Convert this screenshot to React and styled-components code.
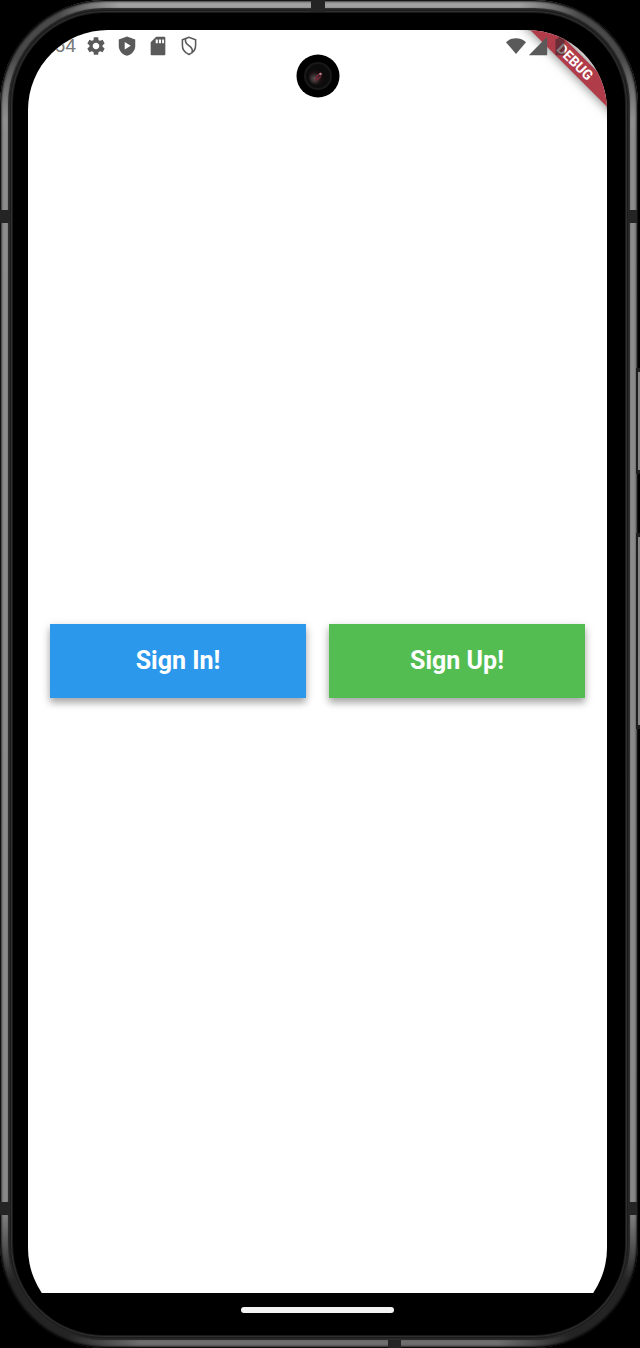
import React from "react";
import styled, { createGlobalStyle, css } from "styled-components";
import { MdSettings, MdSignalCellular4Bar, MdBatteryFull } from "react-icons/md";

const GlobalStyle = createGlobalStyle`
  *, *::before, *::after { box-sizing: border-box; }
  body {
    margin: 0;
    background: #000;
    font-family: Roboto, "Liberation Sans", sans-serif;
  }
`;

const Stage = styled.div`
  display: flex;
  min-height: 100vh;
  padding-right: 2px;
  position: relative;
  overflow: hidden;
`;

const Device = styled.div`
  position: relative;
  flex: 1;
  display: flex;
  padding: 10px;
  border-radius: 104px;
  overflow: hidden;
  background:
    radial-gradient(circle at 34px 34px, #4a4a4a 30px, transparent 90px),
    radial-gradient(circle at calc(100% - 34px) 34px, #4a4a4a 30px, transparent 90px),
    radial-gradient(circle at 34px calc(100% - 34px), #242424 40px, transparent 110px),
    radial-gradient(circle at calc(100% - 34px) calc(100% - 34px), #242424 40px, transparent 110px),
    linear-gradient(#a2a2a2, #8c8c8c 10%, #888 94%, #6c6c6c);

  &::after {
    content: "";
    position: absolute;
    inset: 0;
    border-radius: inherit;
    pointer-events: none;
    box-shadow:
      inset 0 0 0 1px rgba(0, 0, 0, 0.7),
      inset 0 0 2px 2px rgba(0, 0, 0, 0.6);
  }
`;

const Bezel = styled.div`
  flex: 1;
  display: flex;
  padding: 20px 21px 10px 18px;
  border-radius: 94px;
  background: #000;
  box-shadow:
    0 0 1px 2px #262626,
    inset 0 0 0 1px #1c1c1c,
    inset 0 0 0 2px #303030,
    inset 0 0 0 3px #1a1a1a;
`;

const Screen = styled.div`
  position: relative;
  flex: 1;
  display: flex;
  flex-direction: column;
  border-radius: 80px;
  overflow: hidden;
`;

const AppView = styled.div`
  flex: 1;
  display: flex;
  flex-direction: column;
  background: #fff;
`;

const StatusBar = styled.header`
  position: relative;
  z-index: 2;
  display: flex;
  justify-content: space-between;
  align-items: center;
  height: 32px;
  padding: 0 36px 0 22px;
  color: #5a5a5a;
`;

const StatusGroup = styled.div`
  display: flex;
  align-items: center;
  gap: ${(p) => p.$gap}px;

  svg { display: block; width: 22px; height: 22px; }
`;

const Clock = styled.time`
  font-size: 19px;
  line-height: 22px;
  color: #7a7a7a;
`;

const BatteryIcon = styled(MdBatteryFull)`
  color: #3a2428;
  opacity: 0.6;
`;

const Camera = styled.svg`
  position: absolute;
  z-index: 2;
  top: 24px;
  left: 50%;
  width: 44px;
  height: 44px;
  margin-left: -22px;
`;

const DebugBanner = styled.div`
  position: absolute;
  z-index: 1;
  top: 23px;
  right: -48px;
  width: 160px;
  height: 18px;
  background: #b03c4a;
  box-shadow: 0 0 12px rgba(0, 0, 0, 0.55);
  color: #fff;
  font-size: 14px;
  font-weight: 700;
  line-height: 18px;
  text-align: center;
  transform: rotate(45deg);
`;

const Actions = styled.main`
  flex: 1;
  display: flex;
  align-items: center;
  gap: 23px;
  padding: 0 22px 34px;
`;

const ActionButton = styled.button`
  flex: 1;
  height: 74px;
  border: 0;
  padding: 0;
  background: ${(p) => p.$color};
  box-shadow: 0 5px 7px rgba(0, 0, 0, 0.28), 0 2px 10px rgba(0, 0, 0, 0.12);
  color: #fff;
  font-family: inherit;
  font-size: 25px;
  font-weight: 700;
  line-height: 28px;
  cursor: pointer;
`;

const NavBar = styled.footer`
  display: flex;
  justify-content: center;
  height: 35px;
  padding-top: 14px;
`;

const NavHandle = styled.div`
  width: 153px;
  height: 6px;
  border-radius: 3px;
  background: #f4f4f4;
`;

const seamSides = {
  top: css`top: 0; left: 311px; width: 14px; height: 12px;`,
  bottom: css`bottom: 0; left: 388px; width: 13px; height: 8px;`,
  left: css`left: 0; width: 9px; height: 13px;`,
  right: css`right: 1px; width: 8px; height: 13px;`,
};

const Seam = styled.span`
  position: absolute;
  z-index: 1;
  background: #242424;
  ${(p) => seamSides[p.$side]}
  ${(p) => p.$top && css`top: ${p.$top}px;`}
  ${(p) => p.$bottom && css`bottom: ${p.$bottom}px;`}
`;

const SideKey = styled.span`
  position: absolute;
  z-index: 1;
  right: 0;
  top: ${(p) => p.$top}px;
  width: 4px;
  height: ${(p) => p.$length}px;
  border: solid #1e1e1e;
  border-width: 4px 0 4px 2px;
  background: #858585;
`;

const PlayShield = () => (
  <svg viewBox="0 0 24 24" fill="currentColor" aria-hidden="true">
    <path
      fillRule="evenodd"
      d="M12 1.5 3 5v7c0 5.200 3.800 9.300 9 10.700 5.200-1.400 9-5.500 9-10.700V5zM9.500 7.500v8.200l6.600-4.100z"
    />
  </svg>
);

const SdCard = () => (
  <svg viewBox="0 0 24 24" fill="currentColor" aria-hidden="true">
    <path
      fillRule="evenodd"
      d="M10 2h9q1 0 1 1v18q0 1-1 1H5q-1 0-1-1V8zM9.500 5v4h2.300V5zM13 5v4h2.300V5zM16.500 5v4h2V5z"
    />
  </svg>
);

const SlashShield = () => (
  <svg viewBox="0 0 24 24" fill="none" stroke="currentColor" strokeWidth="1.700" aria-hidden="true">
    <path d="M12 2.500 4.800 5.300v6.200c0 4.700 2.900 8 7.200 9.700 4.300-1.700 7.200-5 7.200-9.700V5.300z" />
    <path d="M8.300 4.200c-1 3.600.5 5.200 3.300 7.200 3.400 2.300 5 4.200 3.700 7.800" />
  </svg>
);

const WifiFan = () => (
  <svg viewBox="0 0 22 22" fill="currentColor" aria-hidden="true">
    <path d="M11 19 1 7.200C3.600 4.600 7 3.200 11 3.200s7.400 1.400 10 4z" />
  </svg>
);

export default function App() {
  return (
    <>
      <GlobalStyle />
      <Stage>
        <SideKey $top={368} $length={106} />
        <SideKey $top={533} $length={196} />
        <Device>
          <Seam $side="top" />
          <Seam $side="left" $top={210} />
          <Seam $side="right" $top={210} />
          <Seam $side="left" $bottom={133} />
          <Seam $side="right" $bottom={133} />
          <Seam $side="bottom" />
          <Bezel>
            <Screen>
              <AppView>
                <StatusBar>
                  <StatusGroup $gap={9}>
                    <Clock>:54</Clock>
                    <MdSettings />
                    <PlayShield />
                    <SdCard />
                    <SlashShield />
                  </StatusGroup>
                  <StatusGroup $gap={0}>
                    <WifiFan />
                    <MdSignalCellular4Bar />
                    <BatteryIcon />
                  </StatusGroup>
                </StatusBar>
                <Camera viewBox="0 0 44 44" aria-hidden="true">
                  <defs>
                    <radialGradient id="lens" cx="0.350" cy="0.600" r="0.650">
                      <stop offset="0" stopColor="#555" />
                      <stop offset="0.600" stopColor="#1c1012" />
                      <stop offset="1" stopColor="#0b0b0b" />
                    </radialGradient>
                  </defs>
                  <circle cx="22" cy="22" r="21.500" fill="#000" />
                  <circle cx="22" cy="22" r="13" fill="#0c0c0c" stroke="#181818" strokeWidth="2" />
                  <circle cx="21" cy="23" r="8" fill="url(#lens)" />
                  <path d="M19 27l2-5 4-3M21 26l4-4" stroke="#7a2638" strokeWidth="1.500" fill="none" />
                  <circle cx="24.500" cy="20" r="1.300" fill="#b8808c" />
                </Camera>
                <DebugBanner>DEBUG</DebugBanner>
                <Actions>
                  <ActionButton type="button" $color="#2b98ec">Sign In!</ActionButton>
                  <ActionButton type="button" $color="#53bd52">Sign Up!</ActionButton>
                </Actions>
              </AppView>
              <NavBar>
                <NavHandle />
              </NavBar>
            </Screen>
          </Bezel>
        </Device>
      </Stage>
    </>
  );
}
